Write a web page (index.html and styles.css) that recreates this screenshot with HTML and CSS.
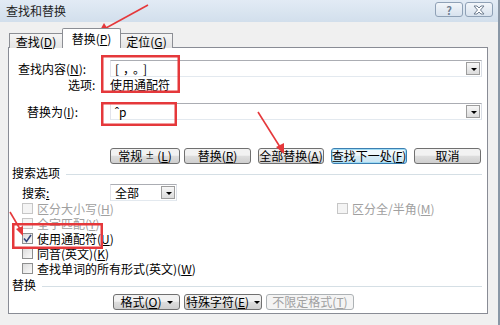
FILE: index.html
```html
<!DOCTYPE html>
<html>
    <head>
        <meta charset="utf-8" />
        <title>查找和替换</title>
        <link rel="stylesheet" href="styles.css">
    </head>
    <body>
        <div class="dialog">
            <div class="titlebar">
                <span class="title">查找和替换</span>
                <span class="tbtn help">?</span>
                <span class="tbtn close">
                    <svg width="14" height="10" viewBox="0 0 14 10">
                        <path d="M2 1 L5 1 L7 3 L9 1 L12 1 L8.5 5 L12 9 L9 9 L7 7 L5 9 L2 9 L5.5 5 Z" fill="#fff" stroke="#6f7e91" stroke-width="1"/>
                    </svg>
                </span>
            </div>

            <div class="tabs">
                <div class="tab">查找(<u>D</u>)</div>
                <div class="tab active">替换(<u>P</u>)</div>
                <div class="tab">定位(<u>G</u>)</div>
            </div>

            <div class="panel">
                <!--查找内容-->
                <div class="row find">
                    <span class="label">查找内容(<u>N</u>):</span>
                    <div class="combo">
                        <span class="combo_text wide_text">[，。]</span>
                        <span class="drop"></span>
                    </div>
                </div>
                <div class="row opts">
                    <span class="label">选项:</span>
                    <span>使用通配符</span>
                </div>
                <div class="row repl">
                    <span class="label">替换为(<u>I</u>):</span>
                    <div class="combo">
                        <span class="combo_text">ˆp</span>
                        <span class="drop"></span>
                    </div>
                </div>

                <div class="btnrow">
                    <span class="btn b_more">常规 <small>±</small> (<u>L</u>)</span>
                    <span class="btn b_repl">替换(<u>R</u>)</span>
                    <span class="btn b_all">全部替换(<u>A</u>)</span>
                    <span class="btn b_next focus">查找下一处(<u>F</u>)</span>
                    <span class="btn b_cancel">取消</span>
                </div>

                <div class="group">
                    <span>搜索选项</span>
                    <span class="line"></span>
                </div>
                <div class="row search">
                    <span class="label">搜索<u>:</u></span>
                    <div class="select">
                        <span class="combo_text">全部</span>
                        <span class="drop"></span>
                    </div>
                </div>

                <div class="check first">
                    <span class="item wide disabled"><span class="box"></span>区分大小写(<u>H</u>)</span>
                    <span class="item disabled"><span class="box"></span>区分全/半角(<u>M</u>)</span>
                </div>
                <div class="check">
                    <span class="item disabled"><span class="box"></span>全字匹配(<u>Y</u>)</span>
                </div>
                <div class="check">
                    <span class="item"><span class="box checked">
                        <svg width="9" height="9" viewBox="0 0 9 9"><path d="M1 4.5 L3.5 7.5 L8 1" fill="none" stroke="#33477a" stroke-width="1.6"/></svg>
                    </span>使用通配符(<u>U</u>)</span>
                </div>
                <div class="check">
                    <span class="item"><span class="box"></span>同音(英文)(<u>K</u>)</span>
                </div>
                <div class="check">
                    <span class="item"><span class="box"></span>查找单词的所有形式(英文)(<u>W</u>)</span>
                </div>

                <div class="group">
                    <span>替换</span>
                    <span class="line"></span>
                </div>
                <div class="btnrow bottom">
                    <span class="btn b_fmt">格式(<u>O</u>) <i class="caret"></i></span>
                    <span class="btn b_spec">特殊字符(<u>E</u>) <i class="caret"></i></span>
                    <span class="btn b_nofmt disabled">不限定格式(<u>T</u>)</span>
                </div>
            </div>

            <!--红色标注-->
            <svg class="marks" width="500" height="325" viewBox="0 0 500 325">
                <g stroke="#e5383b" fill="none" stroke-width="2.5">
                    <rect x="102.25" y="56.25" width="76.5" height="35.5"/>
                    <rect x="102.25" y="103.25" width="73.5" height="21.5"/>
                    <rect x="13.25" y="224.25" width="88.5" height="23.5"/>
                </g>
                <g stroke="#e5383b" stroke-width="1.6">
                    <line x1="148" y1="5" x2="106" y2="28"/>
                    <line x1="258" y1="112" x2="280" y2="147"/>
                    <line x1="10" y1="212" x2="20" y2="229"/>
                </g>
                <g fill="#e5383b">
                    <polygon points="99,32 104,23 109,31"/>
                    <polygon points="284,154 276,147 284,143"/>
                    <polygon points="23,236 16,229 23,226"/>
                </g>
            </svg>
        </div>
    </body>
</html>
```

FILE: styles.css
```css
body{
    margin:0;
}
.dialog{
    position:relative;
    width:500px;
    height:325px;
    box-sizing:border-box;
    background:#f0f0f0;
    border-right:2px solid #8a97a6;
    font-family:"Noto Sans CJK SC","Liberation Sans",sans-serif;
    font-size:12px;
    line-height:14px;
    color:#000;
    overflow:hidden;
}
u{
    text-decoration:underline;
}
.titlebar{
    height:22px;
    display:flex;
    align-items:center;
    padding-left:6px;
    background:linear-gradient(#e2ebf5,#d2dfec);
}
.title{
    flex:1;
    color:#1e1e1e;
}
.tbtn{
    width:26px;
    height:13px;
    margin-top:-3px;
    border:1px solid #8fa1b6;
    border-radius:3px;
    background:linear-gradient(#f2f6fa,#d8e2ee);
    display:flex;
    align-items:center;
    justify-content:center;
    color:#6f7e91;
    font-weight:bold;
    font-size:11px;
}
.help{
    margin-right:2px;
}
.close{
    margin-right:5px;
}

/*页签*/
.tabs{
    height:26px;
    display:flex;
    align-items:flex-end;
    padding-left:9px;
    margin-bottom:-1px;
    position:relative;
    z-index:1;
}
.tab{
    box-sizing:border-box;
    height:15px;
    border:1px solid #8c8e94;
    border-bottom:none;
    background:linear-gradient(#f5f5f5,#e4e4e4);
    display:flex;
    align-items:center;
    justify-content:center;
    padding-top:1px;
}
.tab:nth-child(1){
    width:53px;
    border-right:none;
}
.tab:nth-child(3){
    width:52px;
    border-left:none;
}
.tab.active{
    width:59px;
    height:20px;
    background:#fff;
    border-radius:2px 2px 0 0;
}

/*主面板*/
.panel{
    margin-left:8px;
    width:480px;
    height:267px;
    box-sizing:border-box;
    border:1px solid #898c95;
    background:#fff;
}
.row{
    display:flex;
    align-items:center;
}
.label{
    width:101px;
    box-sizing:border-box;
    flex:none;
}
.find{
    margin-top:12px;
    height:17px;
}
.find .label{
    padding-left:9px;
}
.opts{
    height:14px;
    margin-top:1px;
}
.opts .label{
    padding-left:59px;
}
.repl{
    margin-top:11px;
    height:17px;
}
.repl .label{
    padding-left:18px;
}
.combo,.select{
    width:372px;
    height:17px;
    box-sizing:border-box;
    border:1px solid #abadb3;
    border-left-color:#e2e3ea;
    border-bottom-color:#e3e9ef;
    border-right-color:#dbdfe6;
    display:flex;
    align-items:center;
    justify-content:space-between;
}
.combo_text{
    padding-left:4px;
}
/*全角符号之间留空*/
.wide_text{
    letter-spacing:4px;
    font-family:"Noto Sans CJK SC","DejaVu Sans Mono",monospace;
}
.drop{
    width:14px;
    height:13px;
    box-sizing:border-box;
    margin-right:1px;
    border:1px solid #9d9d9d;
    background:linear-gradient(#f7f7f7,#dcdcdc);
    position:relative;
}
.drop:after{
    content:"";
    position:absolute;
    left:4px;
    top:5px;
    border-left:3px solid transparent;
    border-right:3px solid transparent;
    border-top:3px solid #000;
}

/*按钮*/
.btnrow{
    display:flex;
    margin-top:28px;
    padding-left:101px;
    height:16px;
}
.btn{
    height:16px;
    box-sizing:border-box;
    border:1px solid #707070;
    border-radius:3px;
    background:linear-gradient(#f2f2f2 45%,#dedede 50%,#cfcfcf);
    display:flex;
    align-items:center;
    justify-content:center;
    white-space:nowrap;
}
.btn small{
    font-size:9px;
    margin:0 3px;
}
.b_more{ width:70px; }
.b_repl{ width:67px; margin-left:4px; }
.b_all{ width:66px; margin-left:7px; }
.b_next{ width:76px; margin-left:7px; }
.b_cancel{ width:67px; margin-left:7px; }
.btn.focus{
    border-color:#3c7fb1;
    box-shadow:inset 0 0 0 1px #9fdcf5;
    background:linear-gradient(#f0f8fc 45%,#d7ecf7 50%,#c8e3f1);
}
.btn.disabled{
    color:#a0a0a0;
    border-color:#adb2b5;
    background:#f4f4f4;
}
.caret{
    display:inline-block;
    margin-left:5px;
    border-left:3px solid transparent;
    border-right:3px solid transparent;
    border-top:3px solid #000;
}
.bottom{
    margin-top:2px;
    padding-left:104px;
}
.b_fmt{ width:67px; }
.b_spec{ width:78px; margin-left:4px; }
.b_nofmt{ width:88px; margin-left:4px; }

/*分组标题*/
.group{
    display:flex;
    align-items:center;
    height:14px;
    margin-top:2px;
    padding-left:3px;
}
.line{
    flex:1;
    border-top:1px solid #d5dfe5;
    margin:2px 5px 0 6px;
}
.search{
    margin-top:4px;
    height:17px;
}
.search .label{
    padding-left:13px;
}
.select{
    width:67px;
}

/*复选框*/
.check{
    display:flex;
    height:15px;
    align-items:center;
    padding-left:13px;
}
.item{
    display:flex;
    align-items:center;
}
.item.wide{
    width:315px;
}
.box{
    width:11px;
    height:11px;
    box-sizing:border-box;
    border:1px solid #8e8f8f;
    background:linear-gradient(135deg,#dcdcdc,#fbfbfb);
    margin-right:4px;
    display:flex;
    align-items:center;
    justify-content:center;
}
.disabled .box{
    border-color:#c6c6c6;
    background:#f4f4f4;
}
.item.disabled{
    color:#a0a0a0;
}
.marks{
    position:absolute;
    left:0;
    top:0;
    pointer-events:none;
}
```
